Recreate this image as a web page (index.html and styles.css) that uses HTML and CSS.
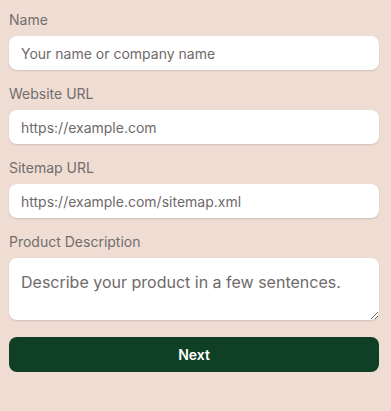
FILE: index.html
```html
<!DOCTYPE html>
<html lang="en">
<head>
  <meta charset="UTF-8">
  <title>Product details</title>
  <link rel="stylesheet" href="styles.css">
</head>
<body>
  <form class="product-form">
    <div class="form-row">
      <label for="name">Name</label>
      <input type="text" id="name" placeholder="Your name or company name">
    </div>
    <div class="form-row">
      <label for="website">Website URL</label>
      <input type="text" id="website" placeholder="https://example.com">
    </div>
    <div class="form-row">
      <label for="sitemap">Sitemap URL</label>
      <input type="text" id="sitemap" placeholder="https://example.com/sitemap.xml">
    </div>
    <div class="form-row">
      <label for="descricao">Product Description</label>
      <textarea id="descricao" placeholder="Describe your product in a few sentences."></textarea>
    </div>
    <button type="submit" class="btn">Next</button>
  </form>
</body>
</html>
```

FILE: styles.css
```css
body { background: #efddd4; font-family: Inter, "Noto Sans", sans-serif; margin: 0; }
.product-form {
  padding: 11px 12px 0 9px;
  display: flex;
  flex-direction: column;
}
.form-row { margin-bottom: 15px; }
label {
  display: block;
  color: #726d6b;
  font-size: 14px;
  line-height: 17px;
  margin-bottom: 8px;
}
input[type="text"], textarea {
  display: block;
  width: 100%;
  box-sizing: border-box;
  border: none;
  border-radius: 8px;
  background: #fff;
  box-shadow: 0 1px 2px #0002;
  font-family: inherit;
  color: #555;
  outline: none;
}
input[type="text"] {
  height: 34px;
  padding: 0 12px;
  font-size: 14px;
}
textarea {
  height: 62px;
  padding: 15px 12px 0;
  font-size: 16px;
  line-height: 19px;
  resize: vertical;
}
::placeholder { color: #6f6a6a; opacity: 1; }
.btn {
  margin-top: 2px;
  height: 35px;
  background: #0f3f24;
  color: #fff;
  border: none;
  border-radius: 8px;
  font-family: inherit;
  font-weight: 600;
  font-size: 14px;
  cursor: pointer;
}
```
